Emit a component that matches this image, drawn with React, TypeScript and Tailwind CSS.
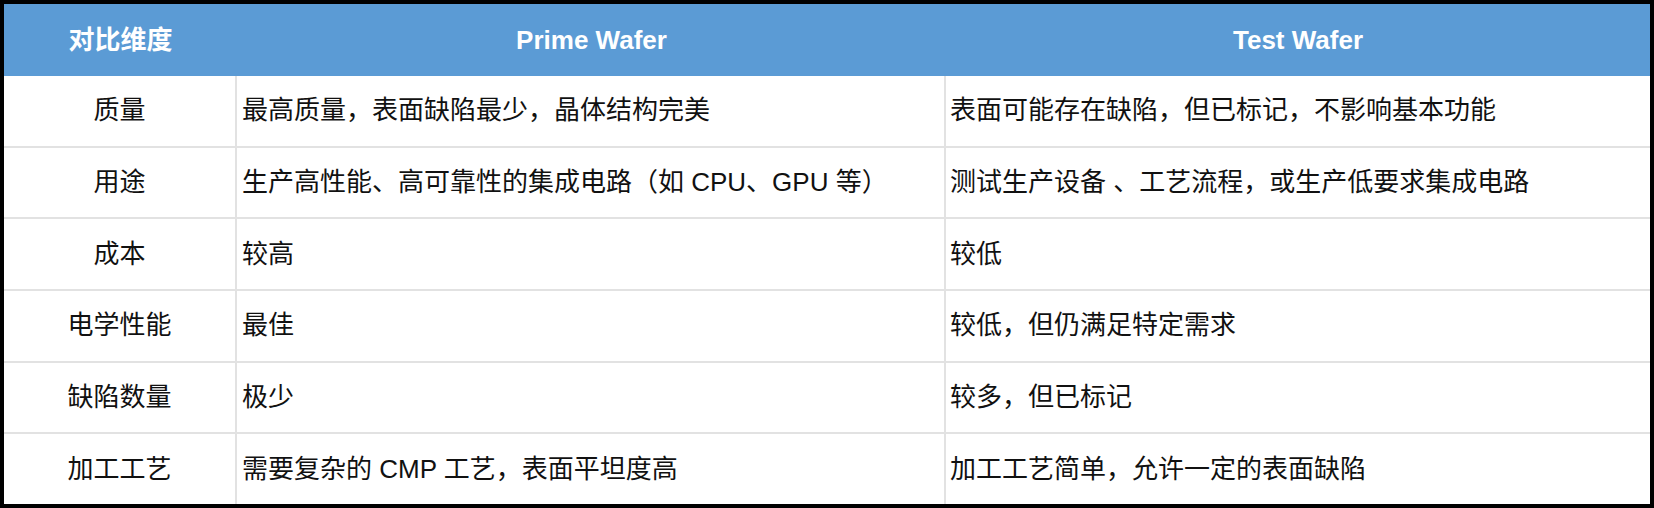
import React from "react";

interface Row {
  label: string;
  prime: string;
  test: string;
}

const rows: Row[] = [
  {
    label: "质量",
    prime: "最高质量，表面缺陷最少，晶体结构完美",
    test: "表面可能存在缺陷，但已标记，不影响基本功能",
  },
  {
    label: "用途",
    prime: "生产高性能、高可靠性的集成电路（如 CPU、GPU 等）",
    test: "测试生产设备 、工艺流程，或生产低要求集成电路",
  },
  { label: "成本", prime: "较高", test: "较低" },
  { label: "电学性能", prime: "最佳", test: "较低，但仍满足特定需求" },
  { label: "缺陷数量", prime: "极少", test: "较多，但已标记" },
  {
    label: "加工工艺",
    prime: "需要复杂的 CMP 工艺，表面平坦度高",
    test: "加工工艺简单，允许一定的表面缺陷",
  },
];

const font = {
  fontFamily: '"Liberation Sans", "Noto Sans CJK SC", sans-serif',
};

const App: React.FC = () => {
  return (
    <div
      className="w-[1654px] h-[508px] bg-black p-[4px] text-[26px] text-[#111]"
      style={font}
    >
      <div className="flex flex-col h-full bg-white">
        {/* Encabezado */}
        <div className="flex h-[72px] bg-[#5b9bd5] text-white font-bold">
          <div className="w-[233px] flex items-center justify-center">
            对比维度
          </div>
          <div className="w-[709px] flex items-center justify-center">
            Prime Wafer
          </div>
          <div className="flex-1 flex items-center justify-center">
            Test Wafer
          </div>
        </div>

        {/* Filas */}
        <div className="flex flex-col flex-1">
          {rows.map((row, i) => (
            <div
              key={row.label}
              className={`flex flex-1 border-[#e2e2e2] ${
                i < rows.length - 1 ? "border-b-2" : ""
              }`}
            >
              <div className="w-[233px] border-r-2 border-[#e2e2e2] flex items-center justify-center">
                {row.label}
              </div>
              <div className="w-[709px] border-r-2 border-[#e2e2e2] flex items-center pl-[5px] whitespace-pre">
                {row.prime}
              </div>
              <div className="flex-1 flex items-center pl-[4px] whitespace-pre">
                {row.test}
              </div>
            </div>
          ))}
        </div>
      </div>
    </div>
  );
};

export default App;
